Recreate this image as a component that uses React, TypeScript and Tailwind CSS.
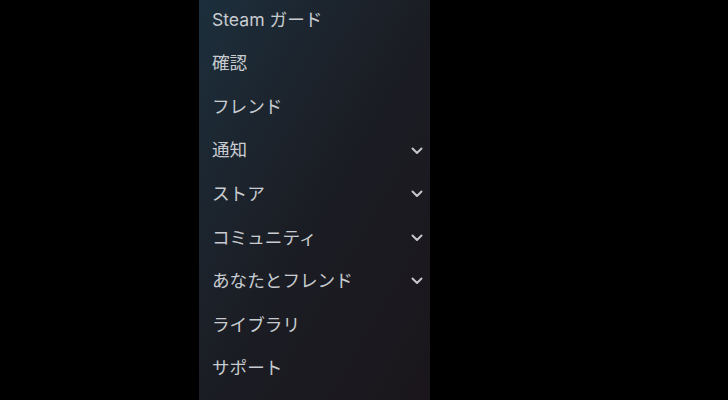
const items: { label: string; expandable?: boolean }[] = [
  { label: "Steam ガード" },
  { label: "確認" },
  { label: "フレンド" },
  { label: "通知", expandable: true },
  { label: "ストア", expandable: true },
  { label: "コミュニティ", expandable: true },
  { label: "あなたとフレンド", expandable: true },
  { label: "ライブラリ" },
  { label: "サポート" },
];

function Chevron() {
  return (
    <svg width="12" height="8" viewBox="0 0 12 8" fill="none" className="text-[#c4c6c9]">
      <path d="M1.5 1.5 L6 6 L10.5 1.5" stroke="currentColor" strokeWidth="2" strokeLinecap="round" strokeLinejoin="round" />
    </svg>
  );
}

export default function App() {
  return (
    <div className="w-[728px] h-[400px] bg-black flex overflow-hidden">
      <nav
        className="ml-[199px] w-[231px] h-full bg-gradient-to-br from-[#1c2f3c] via-[#1b1d24] to-[#1a161b] overflow-hidden"
        style={{ fontFamily: 'Inter, "Noto Sans CJK JP", sans-serif' }}
      >
        <ul className="-mt-[2px] flex flex-col">
          {items.map((item) => (
            <li
              key={item.label}
              className="h-[43.6px] flex items-center justify-between pl-[13px] pr-[7px] text-[17.6px] text-[#c8ccd0]"
            >
              <span>{item.label}</span>
              {item.expandable && <Chevron />}
            </li>
          ))}
        </ul>
      </nav>
    </div>
  );
}
